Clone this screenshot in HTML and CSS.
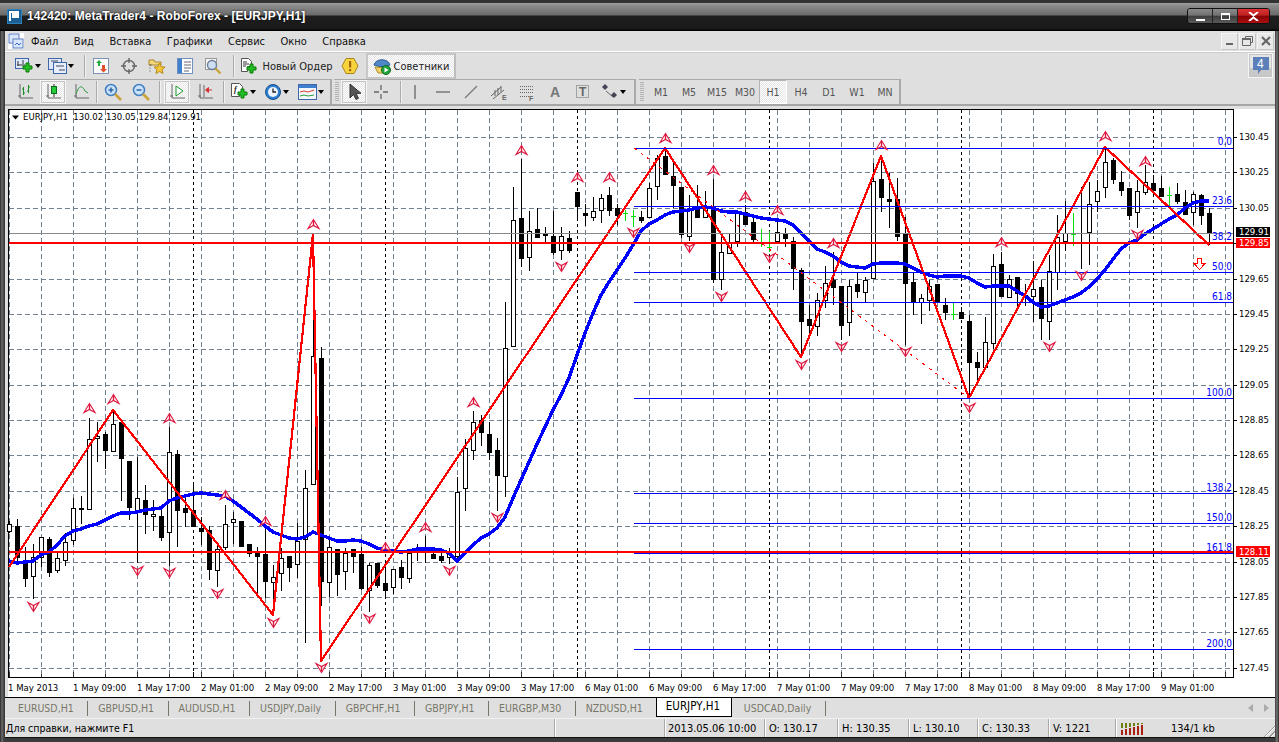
FILE: index.html
```html
<!DOCTYPE html>
<html lang="ru">
<head>
  <meta charset="UTF-8" />
  <title>142420: MetaTrader4 - RoboForex - [EURJPY,H1]</title>
  <link rel="stylesheet" href="styles.css">
</head>
<body>
<div class="window">
  <header class="titlebar">
    <svg class="app-icon" viewBox="0 0 15 15"><rect width="15" height="15" fill="#2f7fb8"/><rect x="1" y="1" width="13" height="13" fill="#1a5f96"/><path d="M3 12V3h8v5H5M5 5h4v1H5" fill="none" stroke="#fff" stroke-width="2"/></svg>
    <span class="title-text">142420: MetaTrader4 - RoboForex - [EURJPY,H1]</span>
    <div class="win-buttons">
      <span class="win-btn"><i class="g-min"></i></span>
      <span class="win-btn"><i class="g-max"></i></span>
      <span class="win-btn win-close"><svg viewBox="0 0 11 9" width="11" height="9"><path d="M1 0l4.500 3.500L10 0M1 9l4.500-3.500L10 9" fill="none" stroke="#fff" stroke-width="2"/></svg></span>
    </div>
  </header>

  <div class="client">
    <nav class="menubar">
      <svg class="mdi-icon" viewBox="0 0 16 16"><rect width="16" height="16" fill="#fff"/><rect x="1" y="1" width="10" height="9" fill="#d9e6fb" stroke="#5f7fc0"/><rect x="5" y="6" width="10" height="9" fill="#d9e6fb" stroke="#5f7fc0"/><path d="M7 12l2-2 2 2 2-2" fill="none" stroke="#36c"/></svg>
      <a class="menu-item">Файл</a>
      <a class="menu-item">Вид</a>
      <a class="menu-item">Вставка</a>
      <a class="menu-item">Графики</a>
      <a class="menu-item">Сервис</a>
      <a class="menu-item">Окно</a>
      <a class="menu-item">Справка</a>
      <div class="mdi-buttons">
        <span class="mdi-btn"><svg viewBox="0 0 12 12" width="12" height="12"><rect x="2" y="8" width="7" height="2" fill="#666"/></svg></span>
        <span class="mdi-btn"><svg viewBox="0 0 12 12" width="12" height="12"><path d="M3.500 3.500V1.500h7v6h-2M.500 3.500h8v7h-8z" fill="none" stroke="#666"/><rect y="3" width="9" height="2" fill="#666"/></svg></span>
        <span class="mdi-btn"><svg viewBox="0 0 12 12" width="12" height="12"><path d="M2 2l8 8M10 2l-8 8" stroke="#666" stroke-width="2.200"/></svg></span>
      </div>
    </nav>

    <div class="toolrow toolrow-top">
      <div class="toolgroup toolgroup-main">
        <span class="tbtn tbtn-drop tbtn-first">
          <svg class="ico" viewBox="0 0 20 18"><rect x=".5" y="1.500" width="13" height="10" fill="#dfe9fa" stroke="#3f66a8"/><path d="M3 4v5M2 8h8M8 3v4" stroke="#333" fill="none"/><path d="M11 6h3v3h3v3h-3v3h-3v-3H8V9h3z" fill="#20c020" stroke="#0b7d0b"/></svg>
          <i class="caret"></i>
        </span>
        <span class="tbtn tbtn-drop">
          <svg class="ico" viewBox="0 0 20 18"><rect x=".5" y="1.500" width="13" height="11" fill="#dfe9fa" stroke="#3f66a8"/><rect x="5.500" y="5.500" width="13" height="11" fill="#e8effc" stroke="#3f66a8"/><path d="M3 4h7M8 9h8M11 13h6" stroke="#445"/></svg>
          <i class="caret"></i>
        </span>
        <span class="sep sep-a"></span>
        <span class="tbtn"><svg class="ico" viewBox="0 0 18 18"><rect x="1.500" y="1.500" width="15" height="15" fill="#fafafa" stroke="#7d93b8"/><path d="M6 9V6H4l3-3 3 3H8v3z" fill="#22aa44"/><path d="M10 8v4H8l3.500 3.500L15 12h-2V8z" fill="#e0502a"/></svg></span>
        <span class="tbtn"><svg class="ico" viewBox="0 0 18 18"><circle cx="9" cy="9" r="5.500" fill="none" stroke="#666" stroke-width="1.400"/><path d="M9 1v5M9 12v5M1 9h5M12 9h5" stroke="#666" stroke-width="1.400"/></svg></span>
        <span class="tbtn"><svg class="ico" viewBox="0 0 18 18"><path d="M1 3h5l1 2h6v3H1z" fill="#f4d77a" stroke="#a8852c"/><path d="M1.500 8h2M1.500 11h1M1.500 14h1" stroke="#555"/><path d="M11.500 6l1.700 3.700 3.800.4-2.800 2.600.8 3.800-3.500-2-3.500 2 .8-3.800-2.800-2.600 3.800-.4z" fill="#f2c53a" stroke="#b98b18"/></svg></span>
        <span class="tbtn"><svg class="ico" viewBox="0 0 18 18"><rect x="1.500" y="1.500" width="15" height="15" fill="#fdfdfd" stroke="#6f8fc0"/><rect x="2" y="2" width="4" height="14" fill="#3f7fd0"/><path d="M8 5h7M8 8h7M8 11h7M8 14h5" stroke="#667"/></svg></span>
        <span class="tbtn"><svg class="ico" viewBox="0 0 18 18"><rect x="1.500" y="1.500" width="11" height="11" fill="#f4f4f4" stroke="#999"/><circle cx="8" cy="8" r="4.500" fill="#cfe0f4" stroke="#6c7f98" stroke-width="1.400"/><path d="M11.500 11.500l5 5" stroke="#c9a23a" stroke-width="2.400"/></svg></span>
        <span class="sep sep-b"></span>
        <span class="tbtn tbtn-text">
          <svg class="ico" viewBox="0 0 18 18"><path d="M1.500 1.500h7l3 3v5h-4v5h-6z" fill="#fff" stroke="#555"/><path d="M3 5h4M3 7h6M3 9h3" stroke="#333"/><path d="M10 7h3v3h3v3h-3v3h-3v-3H7v-3h3z" fill="#20c020" stroke="#0b7d0b"/></svg>
          <span>Новый Ордер</span>
        </span>
        <span class="tbtn"><svg class="ico" viewBox="0 0 18 18"><path d="M5 1.500h8L17 9l-4 7.500H5L1 9z" fill="#f7d33e" stroke="#a9861c"/><rect x="8" y="4" width="2.200" height="6.500" fill="#a6630c"/><rect x="8" y="12" width="2.200" height="2.200" fill="#a6630c"/></svg></span>
        <span class="tbtn tbtn-text tbtn-on">
          <svg class="ico" viewBox="0 0 18 18"><path d="M1 8c1-6 12-7 15-2l1 2c-4 2-12 2-16 0z" fill="#4f88c8" stroke="#2a5a92"/><path d="M2 10l12 1v5H5z" fill="#f2d264" stroke="#b08f2a"/><circle cx="13" cy="13" r="4.500" fill="#1fa43a" stroke="#0f6e20"/><path d="M11.500 10.500l4 2.500-4 2.500z" fill="#fff"/></svg>
          <span>Советники</span>
        </span>
      </div>
      <span class="msg-btn"><svg viewBox="0 0 18 20" width="18" height="20"><path d="M1 1h16v13H9l-3 4v-4H1z" fill="#5b7fb8"/></svg><b>4</b></span>
    </div>

    <div class="toolrow toolrow-bottom">
      <div class="toolgroup toolgroup-charts">
        <span class="tbtn"><svg class="ico" viewBox="0 0 18 18"><path d="M4 1v14H17M2 13h3" fill="none" stroke="#666"/><path d="M7.500 4v8M6 6h1.500M7.500 10H9M12.500 2v8M11 8h1.500M12.500 4H14" fill="none" stroke="#1a8f2a"/></svg></span>
        <span class="tbtn tbtn-on"><svg class="ico" viewBox="0 0 18 18"><path d="M4 1v14H17M2 13h3" fill="none" stroke="#666"/><path d="M10 1v13" stroke="#333"/><rect x="7.500" y="3.500" width="5" height="7" fill="#25c93a" stroke="#0b6e1a"/></svg></span>
        <span class="tbtn"><svg class="ico" viewBox="0 0 18 18"><path d="M4 1v14H17M2 13h3" fill="none" stroke="#666"/><path d="M4 11c3-9 6-9 9-3l3 2" fill="none" stroke="#2a9a3a"/></svg></span>
        <span class="sep sep-c"></span>
        <span class="tbtn"><svg class="ico" viewBox="0 0 18 18"><circle cx="7" cy="7" r="5.500" fill="#c9e2fa" stroke="#3f7fc0" stroke-width="1.500"/><path d="M4.500 7h5M7 4.500v5" stroke="#2a66a8" stroke-width="1.500"/><path d="M11 11l6 6" stroke="#c9a23a" stroke-width="2.600"/></svg></span>
        <span class="tbtn"><svg class="ico" viewBox="0 0 18 18"><circle cx="7" cy="7" r="5.500" fill="#c9e2fa" stroke="#3f7fc0" stroke-width="1.500"/><path d="M4.500 7h5" stroke="#2a66a8" stroke-width="1.500"/><path d="M11 11l6 6" stroke="#c9a23a" stroke-width="2.600"/></svg></span>
        <span class="sep sep-d"></span>
        <span class="tbtn tbtn-on"><svg class="ico" viewBox="0 0 18 18"><path d="M4 1v14H17M2 13h3" fill="none" stroke="#666"/><path d="M8 3l7 5-7 5z" fill="#fff" stroke="#1f9a2e"/></svg></span>
        <span class="tbtn"><svg class="ico" viewBox="0 0 18 18"><path d="M4 1v14H17M2 13h3M8 2v12" fill="none" stroke="#666"/><path d="M16 7h-4M9.500 7l3-2.500v5z" fill="#d83030" stroke="#d83030"/></svg></span>
        <span class="sep sep-d"></span>
        <span class="tbtn tbtn-drop">
          <svg class="ico" viewBox="0 0 20 18"><path d="M1.500 .5h8l3 3v6h-3v4h-8z" fill="#fff" stroke="#555"/><text class="ico-f" x="4" y="9">f</text><path d="M11 6h3v3h3v3h-3v3h-3v-3H8V9h3z" fill="#20c020" stroke="#0b7d0b"/></svg>
          <i class="caret"></i>
        </span>
        <span class="tbtn tbtn-drop tbtn-gap">
          <svg class="ico" viewBox="0 0 18 18"><circle cx="9" cy="9" r="7.500" fill="#2d7fd0" stroke="#184f8c"/><circle cx="9" cy="9" r="5" fill="#eef5fc"/><path d="M9 5.500V9h3" fill="none" stroke="#222" stroke-width="1.300"/></svg>
          <i class="caret"></i>
        </span>
        <span class="tbtn tbtn-drop">
          <svg class="ico" viewBox="0 0 20 18"><rect x=".5" y="1.500" width="18" height="15" fill="#f4f7fb" stroke="#3f66a8"/><rect x="1" y="2" width="17" height="3" fill="#3f7fd0"/><path d="M2 9l4-1 4 1 6-2" fill="none" stroke="#d8402a"/><path d="M2 13l4-1 4 1 6-1" fill="none" stroke="#2a9a3a"/></svg>
          <i class="caret"></i>
        </span>
      </div>
      <div class="toolgroup toolgroup-draw">
        <span class="grip"></span>
        <span class="tbtn tbtn-on"><svg class="ico" viewBox="0 0 18 18"><path d="M5 1v14l3.500-3.500 2.500 5 2.500-1.200-2.500-5H16z" fill="#555" stroke="#333"/></svg></span>
        <span class="tbtn"><svg class="ico" viewBox="0 0 18 18"><path d="M9 2v5M9 11v5M2 9h5M11 9h5" stroke="#666" stroke-width="1.300"/></svg></span>
        <span class="sep sep-e"></span>
        <span class="tbtn"><svg class="ico" viewBox="0 0 18 18"><path d="M9 2v14" stroke="#666" stroke-width="1.300"/></svg></span>
        <span class="tbtn"><svg class="ico" viewBox="0 0 18 18"><path d="M2 9h14" stroke="#666" stroke-width="1.300"/></svg></span>
        <span class="tbtn"><svg class="ico" viewBox="0 0 18 18"><path d="M3 15L15 3" stroke="#777" stroke-width="1.300"/></svg></span>
        <span class="tbtn"><svg class="ico" viewBox="0 0 18 18"><path d="M1 13L11 4M3 16L14 7M5 7v6M8 5v7M11 3v6" stroke="#666"/><text class="ico-letter" x="12" y="17">E</text></svg></span>
        <span class="tbtn"><svg class="ico" viewBox="0 0 18 18"><path d="M2 3.500h13M2 6.500h13M2 9.500h13M2 13.500h9" stroke="#666" stroke-dasharray="1 1"/><text class="ico-letter" x="11" y="18">F</text></svg></span>
        <span class="tbtn"><span class="glyph-a">A</span></span>
        <span class="tbtn"><svg class="ico" viewBox="0 0 18 18"><rect x="2.500" y="2.500" width="12" height="12" fill="none" stroke="#666" stroke-dasharray="1 1"/><text class="ico-t" x="5" y="13">T</text></svg></span>
        <span class="tbtn tbtn-drop">
          <svg class="ico" viewBox="0 0 18 18"><path d="M4 1l3 3-3 3-3-3z" fill="#445"/><path d="M5 8l7 6" stroke="#666"/><path d="M13 9l3 3-3 3-3-3z" fill="#445"/></svg>
          <i class="caret"></i>
        </span>
      </div>
      <div class="toolgroup toolgroup-periods">
        <span class="grip"></span>
        <span class="period">M1</span>
        <span class="period">M5</span>
        <span class="period">M15</span>
        <span class="period">M30</span>
        <span class="period period-on">H1</span>
        <span class="period">H4</span>
        <span class="period">D1</span>
        <span class="period">W1</span>
        <span class="period">MN</span>
      </div>
    </div>

    <main class="chart-wrap">
      <svg id="chart" class="chart" viewBox="5 108 1270 589" width="1270" height="589">
        <g id="plot"></g>
        <rect class="box-black" x="1236" y="227" width="34" height="10"/>
        <rect class="box-red" x="1236" y="238" width="34" height="10"/>
        <rect class="box-red" x="1236" y="546" width="34" height="11"/>
        <g class="sym-label">
          <path d="M12 115.500h7l-3.500 4z" fill="#000"/>
          <text x="23" y="120">EURJPY,H1  130.02 130.05 129.84 129.91</text>
        </g>
        <g class="fib-labels">
          <text x="1232" y="145">0.0</text>
          <text x="1232" y="204">23.6</text>
          <text x="1232" y="240">38.2</text>
          <text x="1232" y="270">50.0</text>
          <text x="1232" y="300">61.8</text>
          <text x="1232" y="396">100.0</text>
          <text x="1232" y="491">138.2</text>
          <text x="1232" y="521">150.0</text>
          <text x="1232" y="551">161.8</text>
          <text x="1232" y="647">200.0</text>
        </g>
        <g class="price-labels">
          <text x="1239" y="140">130.45</text>
          <text x="1239" y="175">130.25</text>
          <text x="1239" y="211">130.05</text>
          <text x="1239" y="282">129.65</text>
          <text x="1239" y="317">129.45</text>
          <text x="1239" y="352">129.25</text>
          <text x="1239" y="388">129.05</text>
          <text x="1239" y="423">128.85</text>
          <text x="1239" y="458">128.65</text>
          <text x="1239" y="494">128.45</text>
          <text x="1239" y="529">128.25</text>
          <text x="1239" y="565">128.05</text>
          <text x="1239" y="600">127.85</text>
          <text x="1239" y="635">127.65</text>
          <text x="1239" y="671">127.45</text>
          <text class="on-box" x="1239" y="235">129.91</text>
          <text class="on-box" x="1239" y="246">129.85</text>
          <text class="on-box" x="1239" y="555">128.11</text>
        </g>
        <g class="time-labels">
          <text x="8" y="691">1 May 2013</text>
          <text x="73" y="691">1 May 09:00</text>
          <text x="137" y="691">1 May 17:00</text>
          <text x="201" y="691">2 May 01:00</text>
          <text x="265" y="691">2 May 09:00</text>
          <text x="329" y="691">2 May 17:00</text>
          <text x="393" y="691">3 May 01:00</text>
          <text x="457" y="691">3 May 09:00</text>
          <text x="521" y="691">3 May 17:00</text>
          <text x="585" y="691">6 May 01:00</text>
          <text x="649" y="691">6 May 09:00</text>
          <text x="713" y="691">6 May 17:00</text>
          <text x="777" y="691">7 May 01:00</text>
          <text x="841" y="691">7 May 09:00</text>
          <text x="905" y="691">7 May 17:00</text>
          <text x="969" y="691">8 May 01:00</text>
          <text x="1033" y="691">8 May 09:00</text>
          <text x="1097" y="691">8 May 17:00</text>
          <text x="1161" y="691">9 May 01:00</text>
        </g>
      </svg>
    </main>

    <div class="tabs">
      <a class="tab tab-first">EURUSD,H1</a>
      <a class="tab">GBPUSD,H1</a>
      <a class="tab">AUDUSD,H1</a>
      <a class="tab">USDJPY,Daily</a>
      <a class="tab">GBPCHF,H1</a>
      <a class="tab">GBPJPY,H1</a>
      <a class="tab">EURGBP,M30</a>
      <a class="tab tab-before">NZDUSD,H1</a>
      <a class="tab tab-active">EURJPY,H1</a>
      <a class="tab">USDCAD,Daily</a>
      <span class="tab-arrows"><i class="arrow-left"></i><i class="arrow-right"></i></span>
    </div>

    <footer class="statusbar">
      <span class="st-help">Для справки, нажмите F1</span>
      <span class="st-cell st-blank"></span>
      <span class="st-cell st-date">2013.05.06 10:00</span>
      <span class="st-cell st-o">O: 130.17</span>
      <span class="st-cell st-h">H: 130.35</span>
      <span class="st-cell st-l">L: 130.10</span>
      <span class="st-cell st-c">C: 130.33</span>
      <span class="st-cell st-v">V: 1221</span>
      <span class="st-cell st-conn">
        <svg viewBox="0 0 24 13" width="24" height="13"><path d="M1 1h2v5H1zM5 1h2v5H5zM9 1h2v4H9zM13 1h2v3h-2zM17 1h2v2h-2zM21 1h2v1h-2z" fill="#6f7f12"/><path d="M1 8h2v5H1zM5 7h2v6H5zM9 6h2v7H9zM13 5h2v8h-2zM17 4h2v9h-2zM21 3h2v10h-2z" fill="#a8200f"/></svg>
        <span>134/1 kb</span>
      </span>
      <i class="resize-grip"></i>
    </footer>
  </div>
</div>
<script src="chart.js"></script>
</body>
</html>
```

FILE: styles.css
```css
* { box-sizing: border-box; }
html, body { margin: 0; height: 100%; overflow: hidden; background: #333; }
body { font-family: "DejaVu Sans Condensed", "Liberation Sans", Arial, sans-serif; font-size: 11px; color: #000; }

.window { width: 1279px; height: 742px; display: flex; flex-direction: column; background: linear-gradient(90deg, #262626 0, #6e6e6e 2px, #3b3b3b 4px, #3b3b3b 1275px, #777 1277px, #262626 1279px); }

/* title bar */
.titlebar { height: 31px; display: flex; align-items: center; padding: 0 9px 0 7px; background: linear-gradient(180deg, #333 0, #333 3px, #a2a2a2 3px, #8d8d8d 5px, #6b6b6b 15px, #1f1f1f 16px, #191919 29px, #000 30px); }
.app-icon { width: 15px; height: 15px; flex: none; margin-top: 1px; }
.title-text { margin-left: 5px; color: #fff; font: bold 12px "Liberation Sans", Arial, sans-serif; letter-spacing: .05px; text-shadow: 0 0 2px #000; white-space: nowrap; }
.win-buttons { margin-left: auto; display: flex; height: 16px; margin-top: 1px; border: 1px solid #111; border-radius: 3px; overflow: hidden; }
.win-btn { width: 25px; display: flex; align-items: center; justify-content: center; background: linear-gradient(180deg, #8a8a8a 0, #707070 45%, #3d3d3d 50%, #5a5a5a 100%); border-right: 1px solid #222; }
.win-close { width: 31px; border-right: 0; background: linear-gradient(180deg, #d33 0, #b22 45%, #800 50%, #a11 100%); }
.g-min { display: block; width: 9px; height: 2px; background: #fff; margin-top: 7px; }
.g-max { display: block; width: 9px; height: 7px; border: 1px solid #fff; border-top-width: 2px; }

/* client area */
.client { flex: 1; min-height: 0; margin: 0 4px 4px 5px; background: #dfdfdf; display: flex; flex-direction: column; border-bottom: 1px solid #111; }

.menubar { height: 21px; flex: none; display: flex; align-items: center; padding-left: 3px; border-bottom: 1px solid #fff; box-shadow: 0 1px 0 #ccc; }
.mdi-icon { width: 16px; height: 16px; margin-right: 7px; }
.menu-item { margin-right: 15.500px; color: #111; font-size: 11px; }
.mdi-buttons { margin-left: auto; display: flex; gap: 1px; margin-right: 1px; }
.mdi-btn { width: 17px; height: 17px; display: flex; align-items: center; justify-content: center; background: #e8e8e8; border-right: 1px solid #c6c6c6; border-bottom: 1px solid #c6c6c6; border-top: 1px solid #f4f4f4; border-left: 1px solid #f4f4f4; }

.toolrow { flex: none; display: flex; align-items: center; height: 27px; }
.toolrow-top { padding-top: 1px; }
.toolrow-bottom { border-bottom: 2px solid #a6a6a6; margin-bottom: 2px; }

.toolgroup { display: flex; align-items: center; height: 100%; }
.toolgroup-main { padding-left: 9px; }
.toolgroup-charts { width: 327px; padding-left: 6px; border-top: 1px solid #aaa; border-right: 2px solid #aaa; }
.toolgroup-draw { width: 302px; margin-left: 2px; border-top: 1px solid #aaa; border-right: 2px solid #aaa; }
.toolgroup-periods { width: 262px; margin-left: 3px; border-top: 1px solid #aaa; border-right: 2px solid #aaa; }

.grip { width: 4px; height: 20px; margin: 0 2px 0 1px; flex: none; background: repeating-linear-gradient(180deg, #b4b4b4 0 1px, transparent 1px 2px); }
.sep { width: 1px; height: 22px; flex: none; background: #aaa; box-shadow: 1px 0 0 #f2f2f2; }
.sep-a { margin: 0 2px 0 5.500px; }
.sep-b { margin: 0 3px 0 6px; }
.sep-c { margin: 0 2px 0 1px; }
.sep-d { margin: 0 3px 0 4px; }
.sep-e { margin: 0 0 0 5px; }
.tbtn { height: 24px; width: 28px; flex: none; display: flex; align-items: center; justify-content: center; }
.tbtn-drop { width: 33px; padding-left: 3px; justify-content: flex-start; }
.tbtn-first { width: 31px; padding-left: 1px; }
.tbtn-gap { margin-right: 2px; }
.tbtn-text { width: auto; gap: 5px; padding: 0 3px; color: #222; }
.tbtn-on { background: repeating-conic-gradient(#fff 0 25%, #e6e6e6 0 50%) 0 0 / 2px 2px; border: 1px solid #f6f6f6; outline: 1px solid #c4c4c4; outline-offset: -2px; }
.toolrow-bottom .tbtn-on { width: 26px; margin: 0 1px; }
.toolgroup-draw .tbtn-on { margin: 0; }
.toolrow-top .tbtn-on { outline: 0; margin-left: 2px; padding: 0 5px; gap: 3px; border: 2px solid #c8c8c8; border-right-color: #bdbdbd; height: 26px; }
.ico { width: 18px; height: 18px; flex: none; display: block; }
.tbtn-drop .ico { width: 20px; }
.caret { width: 0; height: 0; border-top: 4px solid #000; border-left: 3.500px solid transparent; border-right: 3.500px solid transparent; flex: none; }
.ico-f { font: italic bold 8px "Liberation Serif", serif; fill: #222; }
.ico-letter { font: bold 7px "Liberation Sans", Arial, sans-serif; fill: #666; }
.ico-t { font: bold 12px "Liberation Sans", Arial, sans-serif; fill: #666; }
.glyph-a { font: bold 14px "Liberation Sans", Arial, sans-serif; color: #777; }
.msg-btn { position: absolute; left: 1248px; top: 53px; width: 25px; height: 25px; display: flex; align-items: center; justify-content: center; background: linear-gradient(180deg, #e4e4e4 60%, #c8c8c8 60%); border: 1px solid #f6f6f6; outline: 1px solid #c4c4c4; outline-offset: -2px; }
.msg-btn svg { display: block; }
.msg-btn b { position: absolute; left: 8px; top: 3px; color: #fff; font: 12px "Liberation Sans", Arial, sans-serif; }

.toolgroup-periods .grip { margin: 0 3px 0 1px; }
.period { width: 28px; height: 24px; flex: none; display: flex; align-items: center; justify-content: center; color: #555; font-size: 10.500px; }
.period-on { background: repeating-conic-gradient(#fff 0 25%, #e6e6e6 0 50%) 0 0 / 2px 2px; border: 1px solid #b4b4b4; border-right-color: #fff; border-bottom-color: #fff; }

/* chart */
.chart-wrap { flex: none; height: 589px; }
.chart { display: block; font-size: 9.500px; }
.chart text { white-space: pre; fill: #000; }
.sym-label text { font-size: 9.500px; }
.chart .fib-labels text { fill: #0000ff; text-anchor: end; font-size: 10px; }
.chart .on-box { fill: #fff; }
.box-black { fill: #000; }
.box-red { fill: #f00; }

/* tabs */
.tabs { height: 21px; flex: none; display: flex; align-items: flex-start; background: #dfdfdf; border-top: 1px solid #000; position: relative; }
.tab { height: 15px; margin-top: 3px; padding: 0 13.500px 0 10px; line-height: 15px; color: #777768; border-right: 1px solid #777768; font-size: 10.500px; white-space: nowrap; }
.tab-first { padding-left: 13px; }
.tab-before { border-right: 0; padding-right: 11px; }
.tab-active { width: 76px; height: 19px; margin: 0 2px; line-height: 16px; color: #000; background: #fff; border: 1px solid #000; border-top: 0; padding: 0 0 0 9px; font-size: 11.500px; }
.tab-arrows { margin-left: auto; margin-right: 6px; margin-top: 6px; display: flex; gap: 11px; }
.arrow-left { border-right: 5px solid #aaa; border-top: 4px solid transparent; border-bottom: 4px solid transparent; }
.arrow-right { border-left: 5px solid #aaa; border-top: 4px solid transparent; border-bottom: 4px solid transparent; }

/* status bar */
.statusbar { flex: 1; display: flex; align-items: center; position: relative; min-height: 0; border-top: 1px solid #f2f2f2; font-size: 10.500px; }
.st-help { width: 549px; padding-left: 1px; flex: none; }
.st-cell { height: 100%; flex: none; display: flex; align-items: center; padding-left: 4px; border-left: 1px solid #a8a8a8; box-shadow: inset 1px 0 0 #fff; white-space: nowrap; font-size: 11px; }
.st-blank { width: 110px; }
.st-date { width: 100px; padding-left: 3px; }
.st-o { width: 73px; }
.st-h { width: 71px; }
.st-l { width: 69px; }
.st-c { width: 71px; }
.st-v { width: 67px; }
.st-conn { gap: 27px; }
.resize-grip { position: absolute; right: 0; bottom: 0; width: 13px; height: 13px; background: repeating-linear-gradient(135deg, transparent 0 2px, #999 2px 3px, #fff 3px 4px); clip-path: polygon(100% 0, 100% 100%, 0 100%); }
```

FILE: chart.js
```js
// draws the EURJPY,H1 plot into #plot, all numbers are page pixels
const plot = document.getElementById('plot');
const RIGHT = 1233, BOTTOM = 677, TOP = 109, LEFT = 8;

// [high, low, body top, body bottom, w/b/g]
const bars = [
  [521,533,524,532,'w'],[519,563,526,558,'b'],[547,587,560,579,'b'],[544,599,557,577,'w'],[537,567,537,558,'w'],
  [537,577,539,573,'b'],[553,573,558,571,'w'],[533,566,542,561,'w'],[498,545,508,541,'w'],[496,524,508,510,'w'],
  [418,510,439,510,'w'],[422,462,436,439,'w'],[432,469,434,451,'b'],[410,452,424,452,'w'],[422,501,422,459,'b'],
  [461,520,461,508,'b'],[457,563,498,513,'w'],[485,534,500,515,'b'],[500,531,514,517,'w'],[507,541,516,538,'b'],
  [427,566,452,533,'w'],[450,547,454,511,'b'],[497,527,508,513,'b'],[482,527,510,527,'b'],[517,545,528,532,'b'],
  [526,580,530,570,'b'],[545,587,549,571,'w'],[505,550,524,548,'w'],[512,544,519,523,'w'],[521,547,521,547,'b'],
  [544,557,544,554,'b'],[547,593,553,557,'b'],[528,598,554,582,'b'],[565,615,577,583,'w'],[548,591,558,574,'w'],
  [556,582,556,568,'b'],[523,578,541,565,'w'],[470,643,488,540,'w'],[288,485,356,485,'w'],[347,606,358,582,'b'],
  [540,597,547,583,'w'],[549,596,549,575,'b'],[548,590,553,572,'w'],[549,573,549,557,'b'],[547,590,554,589,'b'],
  [563,612,565,591,'w'],[563,588,563,586,'b'],[568,597,583,591,'b'],[569,594,569,588,'w'],[560,589,567,578,'b'],
  [550,583,553,579,'w'],[544,561,551,553,'w'],[536,563,549,552,'w'],[547,559,554,559,'b'],[550,563,556,561,'b'],
  [548,564,553,558,'w'],[477,560,492,557,'w'],[439,511,448,489,'w'],[411,460,422,451,'w'],[415,446,420,433,'b'],
  [422,460,434,453,'b'],[438,511,450,476,'b'],[302,497,348,477,'w'],[187,347,220,347,'w'],[159,267,218,259,'b'],
  [211,271,231,258,'w'],[208,238,229,238,'b'],[227,242,234,236,'w'],[211,255,236,253,'b'],[227,260,236,251,'w'],
  [231,253,238,251,'b'],[192,220,192,207,'b'],[204,226,213,216,'b'],[197,221,211,218,'w'],[194,223,198,211,'w'],
  [187,216,195,211,'b'],[204,225,208,216,'b'],[210,221,213,213,'g'],[210,227,216,216,'g'],[211,223,217,221,'b'],
  [183,218,188,218,'w'],[155,200,158,187,'w'],[150,175,156,175,'b'],[163,208,176,186,'b'],[187,238,187,235,'b'],
  [195,241,208,237,'w'],[185,218,208,218,'b'],[191,218,208,218,'w'],[179,283,208,280,'b'],[233,290,252,280,'w'],
  [233,254,242,254,'w'],[212,247,213,242,'w'],[205,225,212,225,'b'],[218,242,222,240,'b'],[229,247,242,242,'g'],
  [231,252,247,247,'g'],[222,242,232,242,'w'],[228,247,233,239,'b'],[237,290,241,269,'b'],[268,357,270,322,'b'],
  [305,337,319,326,'b'],[293,336,300,327,'w'],[266,308,283,301,'w'],[252,305,280,288,'b'],[286,340,286,326,'b'],
  [280,336,286,323,'w'],[272,298,284,292,'b'],[277,303,280,293,'w'],[163,279,181,279,'w'],[158,212,179,198,'b'],
  [173,228,199,202,'b'],[178,241,199,237,'b'],[217,345,234,284,'b'],[273,315,282,302,'b'],[294,324,298,303,'w'],
  [280,311,286,301,'w'],[284,303,284,303,'b'],[298,320,305,313,'b'],[303,320,314,314,'g'],[307,319,312,319,'b'],
  [315,397,321,363,'b'],[352,385,362,368,'b'],[317,370,342,368,'w'],[254,349,266,344,'w'],[252,297,264,297,'b'],
  [275,298,279,298,'w'],[277,308,277,294,'b'],[284,306,295,297,'w'],[261,322,289,297,'w'],[280,340,287,319,'b'],
  [255,340,271,322,'w'],[215,290,237,273,'w'],[201,251,233,242,'w'],[213,246,234,234,'g'],[187,269,233,234,'b'],
  [182,265,204,233,'w'],[180,212,191,202,'w'],[147,198,162,188,'w'],[158,184,160,180,'b'],[171,196,182,191,'b'],
  [188,220,188,216,'b'],[180,228,191,213,'w'],[165,195,182,193,'w'],[175,195,183,191,'b'],[176,197,188,197,'b'],
  [187,207,195,195,'g'],[183,204,194,202,'b'],[190,215,202,215,'b'],[192,225,194,213,'w'],[194,225,195,216,'b'],
  [208,245,213,233,'b']
];

const zigzag = [[9,567],[113,410],[273,615],[313,234],[321,661],[665,148],[801,357],[881,156],[969,398],[1105,147],[1209,245]];

const ma = [[9,561],[17,563],[25,562],[33,561],[41,555],[49,552],[57,545],[65,536],[73,531],[81,529],[89,526],[97,524],[105,520],[113,516],[121,513],[129,513],[137,512],[145,510],[153,509],[161,508],[169,501],[177,498],[185,496],[193,494],[201,493],[209,494],[217,495],[225,496],[233,501],[241,507],[249,513],[257,519],[265,526],[273,532],[281,535],[289,538],[297,539],[305,537],[313,532],[321,535],[329,538],[337,541],[345,541],[353,540],[361,541],[369,544],[377,548],[385,550],[393,551],[401,552],[409,551],[417,549],[425,549],[433,549],[441,550],[449,553],[457,561],[465,553],[473,545],[481,538],[489,534],[497,528],[505,517],[513,498],[521,480],[529,462],[537,444],[545,427],[553,410],[561,395],[569,378],[577,355],[585,333],[593,313],[601,295],[609,282],[617,270],[625,258],[633,245],[641,231],[649,224],[657,220],[665,215],[673,212],[681,211],[689,210],[697,208],[705,207],[713,208],[721,211],[729,212],[737,212],[745,214],[753,216],[761,218],[769,219],[777,220],[785,221],[793,225],[801,233],[809,241],[817,249],[825,252],[833,256],[841,262],[849,266],[857,267],[865,268],[873,264],[881,263],[889,263],[897,263],[905,264],[913,268],[921,272],[929,275],[937,277],[945,276],[953,276],[961,276],[969,278],[977,283],[985,287],[993,286],[1001,286],[1009,286],[1017,291],[1025,296],[1033,302],[1041,307],[1049,306],[1057,303],[1065,300],[1073,297],[1081,293],[1089,287],[1097,279],[1105,270],[1113,259],[1121,249],[1129,243],[1137,240],[1145,234],[1153,229],[1161,224],[1169,219],[1177,215],[1185,208],[1193,203],[1201,201],[1209,201]];

const upMarks = [[89,408],[113,399],[169,418],[225,495],[265,521],[313,224],[385,547],[425,527],[473,402],[521,150],[577,177],[609,177],[665,138],[713,170],[745,196],[777,210],[833,243],[881,145],[1001,242],[1105,136],[1145,161]];
const downMarks = [[33,607],[137,571],[169,573],[217,594],[273,623],[321,668],[369,619],[449,571],[497,518],[561,267],[633,233],[689,248],[721,297],[769,258],[801,365],[841,347],[905,352],[969,408],[1049,347],[1081,276],[1137,235]];

const gridY = [137,172,208,243,279,314,349,385,420,455,491,526,562,597,632,668];
const fibY = [148,206,272,302,398,493,523,553,649];

let out = '<rect x="8" y="109" width="1267" height="588" fill="#fff"/>';

function hline(y, x1, x2, color, dash) {
  out += `<path d="M${x1} ${y + .5}H${x2}" stroke="${color}"${dash ? ` stroke-dasharray="${dash}"` : ''}/>`;
}
function vline(x, y1, y2, color, dash) {
  out += `<path d="M${x + .5} ${y1}V${y2}" stroke="${color}"${dash ? ` stroke-dasharray="${dash}"` : ''}/>`;
}
function poly(pts, color, width) {
  out += `<polyline points="${pts.map(p => p.join(',')).join(' ')}" fill="none" stroke="${color}" stroke-width="${width}" stroke-linejoin="round"/>`;
}

out += '<g shape-rendering="crispEdges">';

// grid
for (let x = 9; x < RIGHT; x += 32) vline(x, 110, BOTTOM, '#708090', '5 3');
gridY.forEach(y => hline(y, 9, RIGHT, '#708090', '5 3'));
// day separators
for (let x = 193; x < RIGHT; x += 192) vline(x, 110, BOTTOM, '#000', '3 3');

// frame and axes
hline(TOP, LEFT, RIGHT + 1, '#000');
vline(LEFT, TOP, BOTTOM + 1, '#000');
vline(RIGHT, TOP, BOTTOM + 1, '#000');
hline(BOTTOM, LEFT, RIGHT + 1, '#000');
gridY.forEach(y => hline(y, RIGHT, RIGHT + 4, '#000'));
for (let x = 9; x < RIGHT; x += 32) vline(x, BOTTOM - ((x - 9) % 64 ? 3 : 5), BOTTOM, '#333');
for (let x = 193; x < RIGHT; x += 192) vline(x, BOTTOM - 5, BOTTOM, '#000');

// candles
bars.forEach((b, i) => {
  const x = 9 + i * 8;
  const [hi, lo, top, bot, kind] = b;
  const color = kind === 'g' ? '#00e000' : '#000';
  vline(x, hi, lo, color);
  if (kind === 'b') out += `<rect x="${x - 2}" y="${top}" width="5" height="${Math.max(bot - top, 1)}"/>`;
  if (kind === 'w') out += `<rect x="${x - 1.5}" y="${top + .5}" width="4" height="${Math.max(bot - top - 1, 1)}" fill="#fff" stroke="#000"/>`;
  if (kind === 'g') hline(top, x - 2, x + 3, color);
});

// moving average and zigzag
poly(ma, '#0000ff', 3.4);
poly(zigzag, '#f00', 2.2);

// fibo levels
fibY.forEach(y => hline(y, 634, RIGHT, '#0000ff'));
out += '<path d="M634 148L969 398" stroke="#f00" stroke-dasharray="3 5"/>';

// bid and horizontal lines
hline(233, 9, RIGHT, '#87898c');
out += `<rect x="9" y="242" width="${RIGHT - 9}" height="2" fill="#f00"/>`;
out += `<rect x="9" y="551" width="${RIGHT - 9}" height="2" fill="#f00"/>`;
out += '</g>';

// fractal arrows
function mark(x, y, flip) {
  const s = flip ? -1 : 1;
  out += `<g transform="translate(${x + .5} ${y}) scale(1 ${s})">` +
    '<path d="M0 -4.500L5.500 4.500L0 1.500L-5.500 4.500Z" fill="#fff" stroke="#dc143c" stroke-width="1.100"/>' +
    '<path d="M0 -3.500V1.500" stroke="#dc143c" stroke-width="1.400"/></g>';
}
upMarks.forEach(m => mark(m[0], m[1], false));
downMarks.forEach(m => mark(m[0], m[1], true));

// sell arrow at the last bar
out += '<path d="M1197.500 258.500h4v5h3.500l-5.500 6-5.500-6h3.500z" fill="#fff" stroke="#f00" shape-rendering="crispEdges"/>';

plot.innerHTML = out;
```
